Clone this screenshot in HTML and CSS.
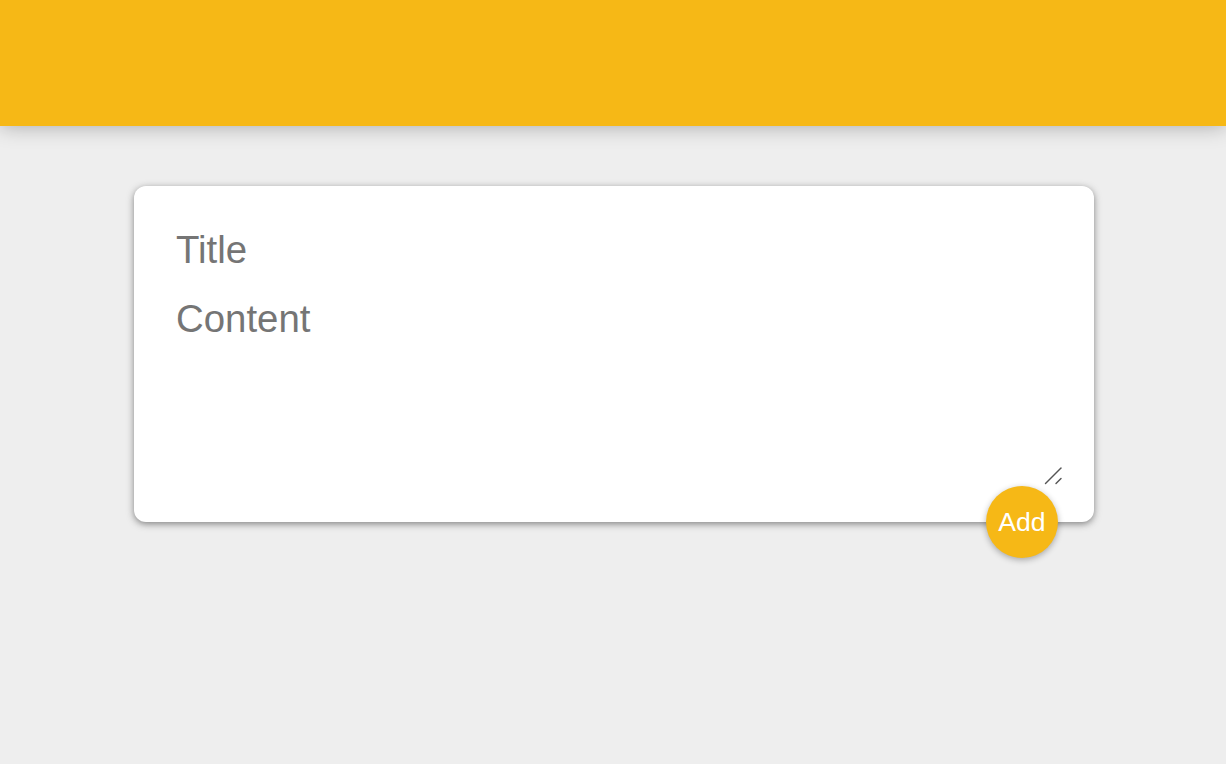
FILE: index.html
```html
<!DOCTYPE html>
<html lang="en">
<head>
<meta charset="utf-8">
<title>Keeper</title>
<link rel="stylesheet" href="styles.css">
</head>
<body>
<header class="app-header"></header>
<main class="page">
  <form class="create-note">
    <input class="note-title" name="title" placeholder="Title">
    <textarea class="note-content" name="content" placeholder="Content"></textarea>
    <svg class="resize-grip" width="20" height="20" viewBox="0 0 20 20" aria-hidden="true">
      <line x1="1.5" y1="17.5" x2="17" y2="2" stroke="#555" stroke-width="1.4" stroke-linecap="round"/>
      <line x1="12" y1="17.5" x2="17" y2="12.5" stroke="#555" stroke-width="1.4" stroke-linecap="round"/>
    </svg>
    <button class="add-button" type="button">Add</button>
  </form>
</main>
</body>
</html>
```
FILE: styles.css
```css
* { box-sizing: border-box; }
html, body { margin: 0; padding: 0; }
body {
  background: #eeeeee;
  font-family: "Liberation Sans", Arial, Helvetica, sans-serif;
  min-height: 764px;
}
.app-header {
  height: 126px;
  background: #f6b816;
  box-shadow: 0 0 20px 0 rgba(0, 0, 0, 0.3);
  position: relative;
  z-index: 1;
}
.page {
  padding: 60px 0 0 2px;
}
.create-note {
  position: relative;
  width: 960px;
  margin: 0 auto;
  background: #fff;
  padding: 30px 30px 38px 30px;
  border-radius: 12px;
  box-shadow: 0 2px 7px rgba(110, 110, 110, 0.85);
}
.note-title, .note-content {
  display: block;
  width: 100%;
  border: none;
  outline: none;
  font-family: inherit;
  font-size: 38.4px;
  line-height: 44px;
  color: #333;
  background: transparent;
  margin: 0;
}
.note-title {
  padding: 12px 12px 8px 12px;
  height: 64px;
}
.note-content {
  padding: 17px 12px 8px 12px;
  height: 204px;
  resize: none;
}
.note-title::placeholder, .note-content::placeholder { color: #757575; opacity: 1; }
.resize-grip {
  position: absolute;
  right: 30px;
  bottom: 36px;
}
.add-button {
  position: absolute;
  right: 36px;
  bottom: -36px;
  width: 72px;
  height: 72px;
  border: none;
  border-radius: 50%;
  background: #f6b816;
  color: #fff;
  font-family: inherit;
  font-size: 26.6px;
  padding: 0;
  box-shadow: 0 2px 6px rgba(0, 0, 0, 0.3);
  cursor: pointer;
}
```
